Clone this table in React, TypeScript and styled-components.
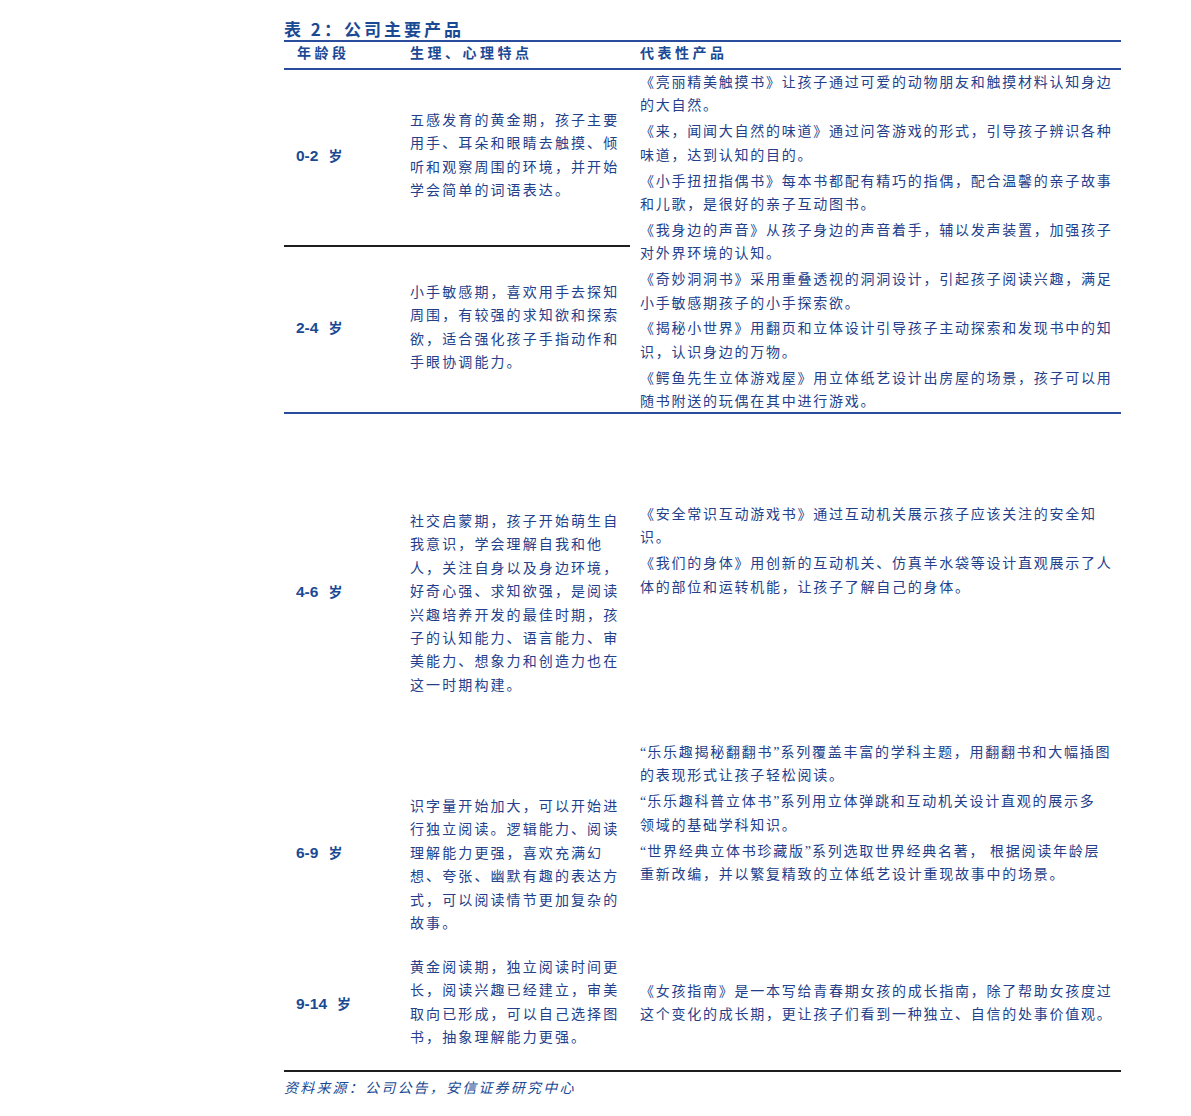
import React from "react";
import styled, { createGlobalStyle } from "styled-components";

const BLUE_TEXT = "#233f8b";
const BLUE_LABEL = "#1b4a94";
const BLUE_RULE = "#2a4c9c";
const BLACK_RULE = "#1e1e1e";

const GlobalStyle = createGlobalStyle`
  html, body {
    margin: 0;
    padding: 0;
    background: #ffffff;
  }
  body {
    font-family: "Noto Sans CJK SC", sans-serif;
    color: ${BLUE_TEXT};
  }
`;

const Page = styled.div`
  width: 837px;
  padding: 17px 0 30px 284px;
`;

const Title = styled.h2`
  margin: 0;
  height: 23px;
  line-height: 23px;
  font-size: 17px;
  font-weight: 700;
  letter-spacing: 3px;
  color: ${BLUE_LABEL};
  border-bottom: 2px solid ${BLUE_RULE};
`;

const Columns = styled.div`
  display: grid;
  grid-template-columns: 114px 232px 1fr;
`;

const HeaderRow = styled(Columns)`
  height: 26px;
  border-bottom: 2px solid ${BLUE_RULE};
`;

const HeaderCell = styled.div<{ $pad: number }>`
  padding-left: ${(p) => p.$pad}px;
  line-height: 20px;
  font-size: 14px;
  font-weight: 700;
  letter-spacing: 3.5px;
  color: ${BLUE_LABEL};
`;

const TopBlock = styled(Columns)`
  grid-template-rows: 177px 165px;
  border-bottom: 2px solid ${BLUE_RULE};
`;

const LeftCell = styled.div<{ $divider?: boolean; $top?: number }>`
  display: flex;
  flex-direction: column;
  justify-content: ${(p) => (p.$top === undefined ? "center" : "flex-start")};
  padding-top: ${(p) => p.$top ?? 0}px;
  padding-bottom: ${(p) => (p.$top === undefined ? 6 : 0)}px;
  border-bottom: ${(p) => (p.$divider ? `2px solid ${BLACK_RULE}` : "none")};
`;

const AgeCell = styled(LeftCell)`
  padding-left: 12px;
`;

const TraitCell = styled(LeftCell)`
  padding-left: 12px;
`;

const ProductCell = styled.div<{ $top: number; $span?: boolean }>`
  grid-column: 3;
  grid-row: ${(p) => (p.$span ? "1 / span 2" : "auto")};
  padding: ${(p) => p.$top}px 9px 0 10px;
`;

const Age = styled.div`
  line-height: 20px;
  font-weight: 700;
  color: ${BLUE_LABEL};
  white-space: nowrap;
`;

const AgeNum = styled.span`
  font-family: "Liberation Sans", Arial, sans-serif;
  font-size: 15.5px;
  margin-right: 10px;
`;

const AgeUnit = styled.span`
  font-family: "Noto Sans CJK SC", sans-serif;
  font-size: 14px;
`;

const Row = styled(Columns)<{ $h: number }>`
  height: ${(p) => p.$h}px;
`;

const Para = styled.div<{ $gap?: number }>`
  & + & {
    margin-top: ${(p) => p.$gap ?? 0}px;
  }
`;

const Line = styled.div<{ $spacing: number }>`
  height: 23.4px;
  line-height: 23.4px;
  font-size: 14px;
  letter-spacing: ${(p) => p.$spacing}px;
  white-space: nowrap;
`;

const Quote = styled.span`
  font-family: "Liberation Serif", serif;
  letter-spacing: 0;
  margin-right: 1px;
`;

const Source = styled.div`
  border-top: 2px solid ${BLACK_RULE};
  padding-top: 5px;
  line-height: 20px;
  font-size: 14px;
  font-style: italic;
  letter-spacing: 2.2px;
  color: ${BLUE_LABEL};
`;

type Block = string[][];

const renderLine = (text: string) =>
  text
    .split(/([“”])/)
    .map((part, i) =>
      part === "“" || part === "”" ? <Quote key={i}>{part}</Quote> : part
    );

const Text: React.FC<{ paras: Block; spacing: number; gap?: number }> = ({
  paras,
  spacing,
  gap,
}) => (
  <>
    {paras.map((lines, i) => (
      <Para key={i} $gap={gap}>
        {lines.map((l, j) => (
          <Line key={j} $spacing={spacing}>
            {renderLine(l)}
          </Line>
        ))}
      </Para>
    ))}
  </>
);

const AgeLabel: React.FC<{ range: string }> = ({ range }) => (
  <Age>
    <AgeNum>{range}</AgeNum>
    <AgeUnit>岁</AgeUnit>
  </Age>
);

const TRAIT_SPACING = 2.1;
const PRODUCT_SPACING = 1.75;

const topProducts: Block = [
  ["《亮丽精美触摸书》让孩子通过可爱的动物朋友和触摸材料认知身边", "的大自然。"],
  ["《来，闻闻大自然的味道》通过问答游戏的形式，引导孩子辨识各种", "味道，达到认知的目的。"],
  ["《小手扭扭指偶书》每本书都配有精巧的指偶，配合温馨的亲子故事", "和儿歌，是很好的亲子互动图书。"],
  ["《我身边的声音》从孩子身边的声音着手，辅以发声装置，加强孩子", "对外界环境的认知。"],
  ["《奇妙洞洞书》采用重叠透视的洞洞设计，引起孩子阅读兴趣，满足", "小手敏感期孩子的小手探索欲。"],
  ["《揭秘小世界》用翻页和立体设计引导孩子主动探索和发现书中的知", "识，认识身边的万物。"],
  ["《鳄鱼先生立体游戏屋》用立体纸艺设计出房屋的场景，孩子可以用", "随书附送的玩偶在其中进行游戏。"],
];

const rows = [
  {
    range: "4-6",
    height: 311,
    ageTop: 166,
    traitTop: 95,
    productTop: 88,
    traits: [
      [
        "社交启蒙期，孩子开始萌生自",
        "我意识，学会理解自我和他",
        "人，关注自身以及身边环境，",
        "好奇心强、求知欲强，是阅读",
        "兴趣培养开发的最佳时期，孩",
        "子的认知能力、语言能力、审",
        "美能力、想象力和创造力也在",
        "这一时期构建。",
      ],
    ],
    products: [
      ["《安全常识互动游戏书》通过互动机关展示孩子应该关注的安全知", "识。"],
      ["《我们的身体》用创新的互动机关、仿真羊水袋等设计直观展示了人", "体的部位和运转机能，让孩子了解自己的身体。"],
    ],
  },
  {
    range: "6-9",
    height: 220,
    ageTop: 116,
    traitTop: 69,
    productTop: 15,
    traits: [
      [
        "识字量开始加大，可以开始进",
        "行独立阅读。逻辑能力、阅读",
        "理解能力更强，喜欢充满幻",
        "想、夸张、幽默有趣的表达方",
        "式，可以阅读情节更加复杂的",
        "故事。",
      ],
    ],
    products: [
      ["“乐乐趣揭秘翻翻书”系列覆盖丰富的学科主题，用翻翻书和大幅插图", "的表现形式让孩子轻松阅读。"],
      ["“乐乐趣科普立体书”系列用立体弹跳和互动机关设计直观的展示多", "领域的基础学科知识。"],
      ["“世界经典立体书珍藏版”系列选取世界经典名著， 根据阅读年龄层", "重新改编，并以繁复精致的立体纸艺设计重现故事中的场景。"],
    ],
  },
  {
    range: "9-14",
    height: 125,
    ageTop: 47,
    traitTop: 10,
    productTop: 34,
    traits: [
      [
        "黄金阅读期，独立阅读时间更",
        "长，阅读兴趣已经建立，审美",
        "取向已形成，可以自己选择图",
        "书，抽象理解能力更强。",
      ],
    ],
    products: [
      ["《女孩指南》是一本写给青春期女孩的成长指南，除了帮助女孩度过", "这个变化的成长期，更让孩子们看到一种独立、自信的处事价值观。"],
    ],
  },
];

export default function App() {
  return (
    <>
      <GlobalStyle />
      <Page lang="zh-CN">
        <Title>表 2：公司主要产品</Title>
        <HeaderRow>
          <HeaderCell $pad={13}>年龄段</HeaderCell>
          <HeaderCell $pad={12}>生理、心理特点</HeaderCell>
          <HeaderCell $pad={10}>代表性产品</HeaderCell>
        </HeaderRow>

        <TopBlock>
          <AgeCell $divider>
            <AgeLabel range="0-2" />
          </AgeCell>
          <TraitCell $divider>
            <Text
              spacing={TRAIT_SPACING}
              paras={[
                [
                  "五感发育的黄金期，孩子主要",
                  "用手、耳朵和眼睛去触摸、倾",
                  "听和观察周围的环境，并开始",
                  "学会简单的词语表达。",
                ],
              ]}
            />
          </TraitCell>
          <ProductCell $top={0} $span>
            <Text spacing={PRODUCT_SPACING} gap={2.5} paras={topProducts} />
          </ProductCell>
          <AgeCell>
            <AgeLabel range="2-4" />
          </AgeCell>
          <TraitCell>
            <Text
              spacing={TRAIT_SPACING}
              paras={[
                [
                  "小手敏感期，喜欢用手去探知",
                  "周围，有较强的求知欲和探索",
                  "欲，适合强化孩子手指动作和",
                  "手眼协调能力。",
                ],
              ]}
            />
          </TraitCell>
        </TopBlock>

        {rows.map((r) => (
          <Row key={r.range} $h={r.height}>
            <AgeCell $top={r.ageTop}>
              <AgeLabel range={r.range} />
            </AgeCell>
            <TraitCell $top={r.traitTop}>
              <Text spacing={TRAIT_SPACING} paras={r.traits} />
            </TraitCell>
            <ProductCell $top={r.productTop}>
              <Text spacing={PRODUCT_SPACING} paras={r.products} />
            </ProductCell>
          </Row>
        ))}

        <Source>资料来源：公司公告，安信证券研究中心</Source>
      </Page>
    </>
  );
}
